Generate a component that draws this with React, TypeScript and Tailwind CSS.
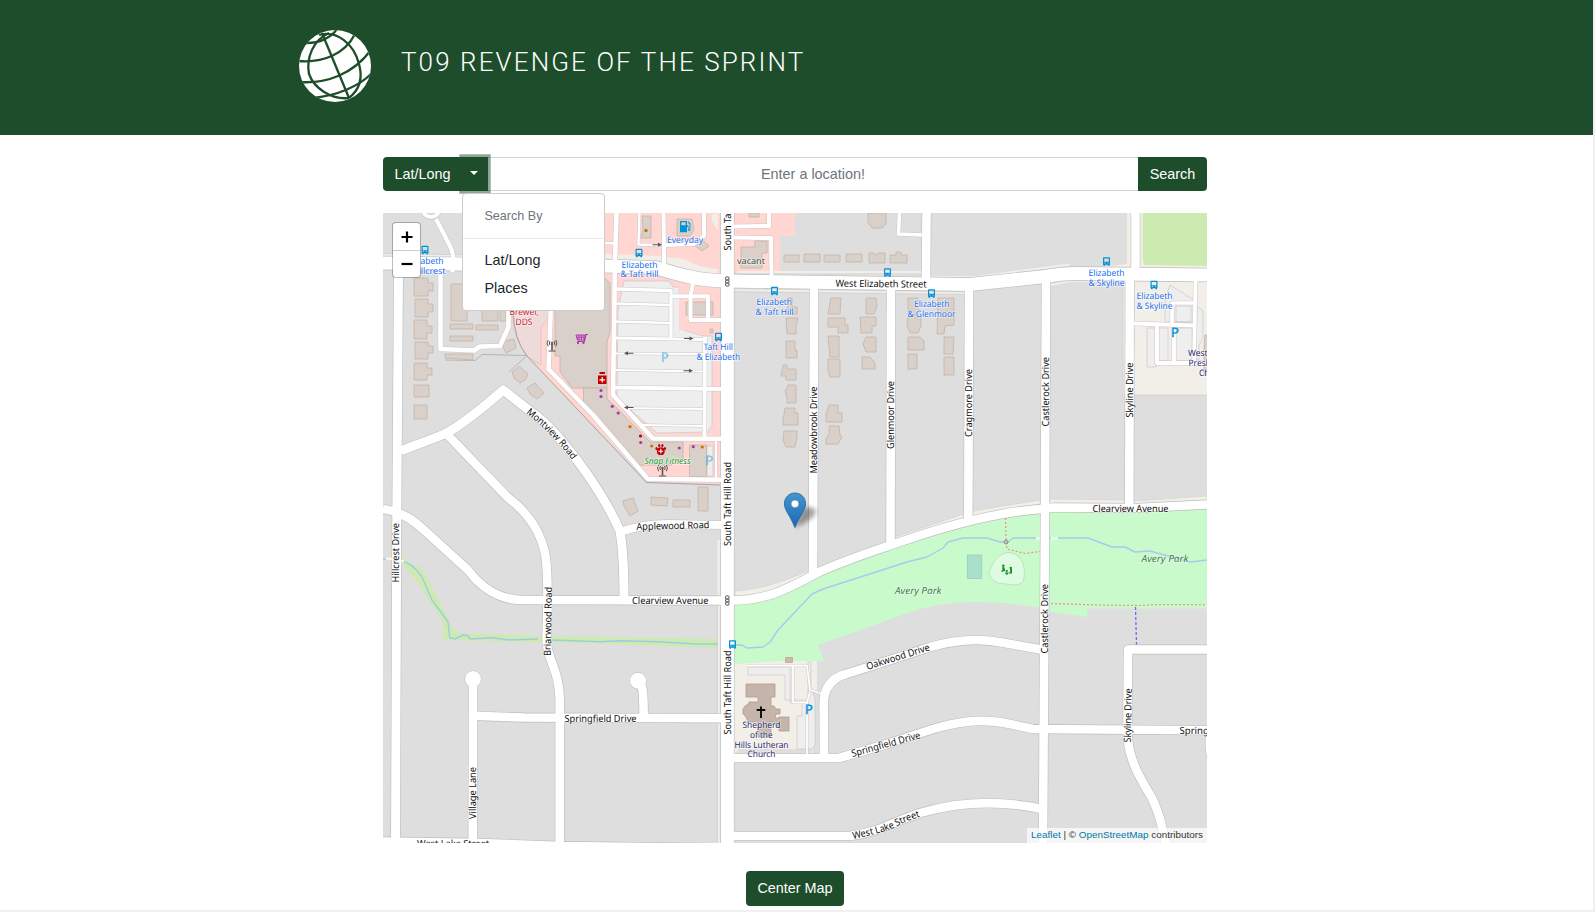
import React from "react";

const ROAD = "#ffffff";
const CASING = "#bdbdbd";

type Road = { d: string; w: number };

const streets: Road[] = [
  { d: "M398.5 270L396.7 530L395.5 843", w: 9 },
  { d: "M401 451C416 444 432 440 446.7 432.7C464 424 486 405 503.3 390L530 411C550 425 563 442 577 460C592 480 608 504 620 531C624 555 624 580 624 598", w: 9 },
  { d: "M446.7 434L508.3 498C530 514 541 535 545 553C548 568 548 600 546.5 640C547 660 559.5 670 559.7 700L559.7 843", w: 8.6 },
  { d: "M383 509C402 512 413 520 424 530L468 570C480 586 497 600 523 600L727 600.5", w: 8.6 },
  { d: "M727 600.5C765 601 786 590 817 573C850 558 880 549 900 542C940 528 990 513 1040 509L1053 507.5L1137 508L1207 504.5", w: 8.6 },
  { d: "M620 532C637 526 652 524 668 524L722 525", w: 8 },
  { d: "M814 287L813 573", w: 8.6 },
  { d: "M891 287L890.5 545", w: 8.6 },
  { d: "M969 287L968.3 520", w: 8.6 },
  { d: "M1046 276L1045 509L1043 843", w: 8.6 },
  { d: "M1135.5 213L1135.5 275", w: 8.6 },
  { d: "M1129.7 275L1129.3 508", w: 8.6 },
  { d: "M926.5 213L926 284", w: 8.6 },
  { d: "M473 679L472.8 843", w: 8.6 },
  { d: "M473 715.8L523 717.5L727 718.3", w: 8.6 },
  { d: "M639 681C643 686 643.5 692 643.7 718", w: 8.6 },
  { d: "M383 841.5L480 843L560 846L720 848", w: 8.6 },
  { d: "M824 758L823.7 706C823 688 832 678 846 674L887 661L930 647C965 637 990 640 1003 642.7L1044 650", w: 8.6 },
  { d: "M727 758L839 758L887 744L933 729C970 718 990 720 1010 724L1033 729L1207 730.3", w: 8.6 },
  { d: "M727 836L850 836C880 832 890 823 920 813C960 801 1000 800 1042 809", w: 8.6 },
  { d: "M1207 649.5L1128 649.5L1127.5 730C1127 755 1138 775 1149 793C1160 811 1163 832 1166 845", w: 8.6 },
  { d: "M1210 736Q1208 752 1214 766", w: 8 },
  { d: "M383 263L604 266L655 267.5C680 275 700 281 727 281L970 284.5L1045 276.5Q1062 273.5 1075 273.5L1207 275", w: 13.2 },
  { d: "M727.4 213V843", w: 13 },
];

const lanes: Road[] = [
  { d: "M616.5 213L615 262L613 395L653 438.5L722 438.7", w: 4.6 },
  { d: "M551.5 290L548.5 369L593 415L648 479L722 479.7", w: 4.6 },
  { d: "M604 243L616 243.5", w: 2.6 },
  { d: "M639.5 213L638.5 244.5L660 245", w: 2.4 },
  { d: "M663.5 213L664 245L694 244L704 236V213", w: 4 },
  { d: "M664 243L664 266", w: 4.4 },
  { d: "M734 226.5L769 226V213", w: 4 },
  { d: "M734 237.5L771 238L771.5 276", w: 4 },
  { d: "M899.5 213L898.5 234L922 235", w: 3.6 },
  { d: "M615 289L671 290.5L671 338", w: 3.4 },
  { d: "M615 303.5L671 305", w: 2.4 },
  { d: "M615 321.5L671 323", w: 2.4 },
  { d: "M615 338L705 339.5", w: 3.2 },
  { d: "M615 353.5L705 354", w: 2.2 },
  { d: "M615 370L705 371.5", w: 2.2 },
  { d: "M615 387.5L722 389", w: 3.8 },
  { d: "M624 408L704 409", w: 2.2 },
  { d: "M642 425L704 426", w: 2.2 },
  { d: "M705 337L704.5 438", w: 3.8 },
  { d: "M693.5 281L690.5 296V320H722", w: 4 },
  { d: "M671 296.3H708V320", w: 4 },
  { d: "M716 440V479", w: 2.2 },
  { d: "M452.5 272V264Q455 255 449 244L436 219", w: 4.2 },
  { d: "M440.5 270V349L474 350.5L480 346.5L500 346L508.5 327V300", w: 4.6 },
  { d: "M1195.5 280L1194 365", w: 3.8 },
  { d: "M1134 323.5L1194 325.5", w: 4 },
  { d: "M1172 325V303H1194", w: 3.6 },
  { d: "M1157 325V363H1205", w: 4 },
  { d: "M1174 326V363", w: 3.8 },
  { d: "M747 665.5H807L810 690L823 694", w: 1.8 },
  { d: "M793 665V702.5H807L810 692", w: 1.8 },
  { d: "M807 702V757", w: 1.8 },
];

const houses: string[] = [
  "414,278 428,278 428,283 433,283 433,291 428,291 428,296 414,296",
  "415,299 428,299 428,304 433,304 433,312 428,312 428,317 415,317",
  "414,320 427,320 427,326 432,326 432,333 427,333 427,339 414,339",
  "415,342 428,342 428,346 433,346 433,353 428,353 428,359 415,359",
  "414,363 427,363 427,368 432,368 432,375 427,375 427,380 414,380",
  "414,385 429,385 429,397 414,397",
  "414,405 427,405 427,419 414,419",
  "451,284 467,284 467,321 451,321",
  "482,290 498,290 498,321 482,321",
  "500,300 506,300 506,321 500,321",
  "450,324 473,324 473,329 450,329",
  "476,325 498,325 498,330 476,330",
  "450,336 473,336 473,341 450,341",
  "445,354 473,354 473,360 445,358",
  "504,341 514,339 516,348 506,353 503,347",
  "512,372 519,366 528,374 526,379 520,383 514,378",
  "527,388 535,383 544,393 537,399 530,394",
  "623,501 633,498 638,511 630,516 624,506",
  "651,497 668,498 667,506 651,505",
  "673,500 690,500 690,507 673,507",
  "698,487 708,487 708,511 698,511",
  "642,216 651,216 651,238 641,238 643,230",
  "677,219 692,219 694,230 690,236 677,236",
  "700,238 709,246 702,251 694,245",
  "741,247 755,247 755,241 767,241 767,253 762,253 762,268 741,268",
  "749,213 759,213 759,217 749,217",
  "784,255 799,255 799,262 784,262",
  "804,254 820,254 820,262 804,262",
  "824,255 840,255 840,262 824,262",
  "846,254 862,254 862,262 846,262",
  "869,253 874,253 876,255 879,253 885,253 885,263 869,263",
  "890,255 896,255 896,252 901,252 901,255 907,255 907,263 890,263",
  "868,213 886,213 886,224 882,228 872,228 868,222",
  "787,298 792,298 792,307 797,307 797,314 788,314",
  "786,318 798,318 796,326 796,334 787,334",
  "786,341 795,341 795,350 797,350 797,358 786,358",
  "783,365 787,365 787,369 796,369 796,380 786,380 786,376 781,376",
  "788,385 796,385 796,403 787,403 787,398 785,391",
  "785,408 795,408 795,413 798,413 798,425 783,425 783,420",
  "784,431 797,431 797,437 795,447 786,447 783,440",
  "831,298 841,298 840,314 828,314",
  "828,318 845,318 845,325 848,325 848,333 838,333 838,327 828,327",
  "828,336 839,336 839,357 830,357",
  "828,359 840,359 840,377 830,377 828,370",
  "866,298 876,298 877,306 874,314 866,314",
  "860,317 876,317 876,326 872,326 872,333 861,333",
  "866,337 876,337 876,352 866,352 863,344",
  "862,357 870,357 875,363 875,369 862,369",
  "908,298 918,298 918,315 908,315",
  "908,317 921,317 921,326 918,333 910,333 907,325",
  "908,337 920,337 924,341 924,350 908,350",
  "908,354 917,354 917,369 908,369",
  "938,298 954,298 954,325 945,326 944,334 937,334",
  "944,337 954,337 953,354 944,354",
  "944,357 954,357 954,375 944,375",
  "829,405 838,405 838,413 842,413 842,422 826,422 826,414",
  "829,426 839,426 840,435 842,437 838,444 826,444 826,438 829,435",
];

const busStops: [number, number][] = [
  [425, 250], [639, 253], [774.5, 291], [718.5, 337], [887.5, 272.5],
  [931.5, 293.5], [1106.5, 261.5], [1154, 285], [732.5, 644.5],
];

function Label({
  x, y, w, rot = 0, size = 9.8, color = "#111", italic = false, children,
}: {
  x: number; y: number; w: number; rot?: number; size?: number; color?: string; italic?: boolean; children: string;
}) {
  return (
    <text
      x={0}
      y={0}
      transform={`translate(${x} ${y}) rotate(${rot})`}
      textLength={w}
      lengthAdjust="spacingAndGlyphs"
      fontSize={size}
      fill={color}
      fontStyle={italic ? "italic" : "normal"}
      stroke="#ffffff"
      strokeOpacity={0.6}
      strokeWidth={1.6}
      strokeLinejoin="round"
      paintOrder="stroke"
    >
      {children}
    </text>
  );
}

function Bus({ x, y }: { x: number; y: number }) {
  return (
    <g transform={`translate(${x} ${y})`}>
      <path fillRule="evenodd" fill="#0092da" d="M-3-4.2H3L3.5-3.5V3.2H3V4.2H1.4V3.2H-1.4V4.2H-3V3.2H-3.5V-3.5ZM-2.3-2.9V.2H2.3V-2.9ZM-2.2 1.2V2.1H-1V1.2ZM1 1.2V2.1H2.2V1.2Z" />
    </g>
  );
}

function Arrow({ x, y, left = false }: { x: number; y: number; left?: boolean }) {
  return (
    <g transform={`translate(${x} ${y}) scale(${left ? -1 : 1} 1)`} fill="#555">
      <path d="M-4.5-.5H1V-2L5 0L1 2V.5H-4.5Z" />
    </g>
  );
}

function Signal({ x, y }: { x: number; y: number }) {
  return (
    <g transform={`translate(${x} ${y})`} fill="none" stroke="#555" strokeWidth="1">
      <rect x="-1.7" y="-4.6" width="3.4" height="3.1" rx=".8" />
      <rect x="-1.7" y="-1.5" width="3.4" height="3" rx=".8" />
      <rect x="-1.7" y="1.5" width="3.4" height="3.1" rx=".8" />
    </g>
  );
}

function Antenna({ x, y }: { x: number; y: number }) {
  return (
    <g transform={`translate(${x} ${y})`} fill="none" stroke="#555" strokeWidth="1">
      <path d="M0-2V5" strokeWidth="1.6" />
      <path d="M-3.5 5.5H3.5M-2-4.5Q-3.4-2.5-2-.5M2-4.5Q3.4-2.5 2-.5M-3.8-5.5Q-6-2.5-3.8.8M3.8-5.5Q6-2.5 3.8.8" />
      <circle r=".8" cy="-2.5" fill="#555" />
    </g>
  );
}

function CityMap() {
  return (
    <svg
      className="block h-[630px] w-[824px]"
      viewBox="383 213 824 630"
      fontFamily="'Noto Sans', sans-serif"
      textRendering="geometricPrecision"
    >
      <rect x="383" y="213" width="824" height="630" fill="#dedede" />

      {/* land use */}
      <path fill="#ffd6d1" d="M590 213H720.5V484L648 481L538 368L541 325L546 318V270H590Z" />
      <path fill="#ffd6d1" d="M734 213H795V236H780V272H734Z" />
      <path fill="#efdada" stroke="#d3b8b8" strokeWidth=".6" d="M500 290H549V318L541 327V365L527 356Q514 340 513 318Z" />
      <path fill="none" stroke="#a98f8f" strokeWidth=".8" d="M513 310Q514 340 527 356L646.5 482.5L720 485" />
      <path fill="none" stroke="#aaa" strokeWidth=".8" d="M445 360L475 360.5L482 354.5L527 355.5L509 372" />
      <path fill="#f2efe9" d="M604 254L660 256L684 259Q700 268 718 269V276L690 277L660 266L604 264ZM712 215L718 213V231L712 221Z" />
      <path fill="#f2efe9" d="M1134 281H1207V395H1126V281Z" />
      <path fill="#f2efe9" d="M1127 213H1207V270H1070L1127 264Z" />
      <path fill="#dedede" d="M1072 213H1127V258Q1127 263 1122 263.5L1072 266Z" />
      <path fill="#cdebb0" d="M1142.7 213H1207V266L1145 265Q1142.7 263 1142.7 259Z" />
      <path fill="#c8facc" d="M734 600C765 601 786 592 817 575C880 548 960 518 1044 511V608L1003 603Q960 600 933 606Q910 611 897 617L818 645L824 661L780 661L734 664Z" />
      <path fill="#c8facc" d="M1044 510H1207V608.5H1087L1088 617L1044 611Z" />
      <path fill="#cdebb0" d="M401 555L412 565L421.7 567L453 628L457 633.5L538 636L717 639V648L640 645L538 642L444 640L441.7 620L418 583L401 562Z" />
      <path fill="#f2efe9" d="M734 664L780 661H817V753H734Z" />
      <path fill="#dedede" d="M817 661H824V753H813V690H817ZM739 749H812V755H734Z" />
      <path fill="#f2efe9" stroke="#d0ccc6" strokeWidth=".5" d="M735 591C765 589 786 580 808 571V575C780 592 760 594 735 596ZM818 567L886 541V546L818 573ZM895 537L964 514V520L895 543ZM973 511L1040 500V506L973 516ZM1050 499L1125 500V505H1050ZM1134 501L1207 496V501L1134 505Z" />
      <path fill="none" stroke="#f2efe9" strokeWidth="2.2" d="M383 255L604 258M718.7 540V843M1124 282V395M734 274L925 276M930 277L975 277L1070 264.5M734 290.5L970 293.5M1050 285L1070 281L1126 281M737 272H922" />
      <path fill="none" stroke="#c8c8c8" strokeWidth=".6" d="M383 253.5L604 257M717.3 606V843M1123 282V395M1134 395H1207M734 273.5L925 275.5M734 291.7L970 294.5M1137.5 213V268" />

      {/* car parks */}
      <g fill="#eeeeee" stroke="#c9c0c0" strokeWidth=".6">
        <path d="M618 310L624 281H669L673 287H679V296L683 330L703 336H712V426L708 432L657 433L617 398Z" />
        <path d="M1170 285L1194 300V322H1165V300ZM1147 328H1156V367H1147ZM1158 328H1168V361H1158ZM1175 328H1192V361H1175ZM1176 306H1191V322H1176ZM1197 306L1203 311V338L1199 345V360H1196Z" />
        <path d="M748 667H790V703H802V716H797V749H812L815 745V698L811 690V662H808V700H785V675H748Z" />
        <path d="M707 446H713V476H707Z" />
      </g>
      <path fill="#ffd6d1" d="M679 286L690 284H716V330H679Z" />

      {/* buildings */}
      <g fill="#d9d0c9" stroke="#c5b3a6" strokeWidth=".8">
        <path d="M555 290L560 278H605L610 283V332L607 342V388H572L560 372V356H555Z" />
        <path d="M583.5 388H607V399L613 404L650 442H683V460H672V465H638L626 450L583.5 407Z" />
        <path d="M689.5 445H706.5V476.5H689.5Z" />
        <path d="M686 302H713V315H686ZM710 329H713V333H710Z" />
        <path d="M1205 335H1208V375H1204V345Z" />
        {houses.map((p) => (
          <polygon key={p} points={p} />
        ))}
      </g>
      <path fill="#c5b5aa" stroke="#b09c8e" strokeWidth=".8" d="M746 684H775V697H771V706H774L776 709H780V714H776L775 718H779V717H789V731H779V728L771 721V737H758V722H748L746 717L743 714V709L746 705H748L749 702H758V697H746Z" />
      <path fill="#cbb9ae" stroke="#b09c8e" strokeWidth=".6" d="M785.5 657.5H792.5V662.5H785.5Z" />

      {/* water, pitch, playground */}
      <g fill="none" stroke="#a0cbe3" strokeWidth="1.4" strokeLinejoin="round">
        <path d="M383 559L400 561Q412 562 422 577L432 600L448 622L449.7 637.5L455 639L463 635L467.7 635.5L470 639L493 637.7L508 640L538 639M552 640L600 641.7L620 640.7L657 641.7L697 644L718 644" />
        <path stroke="#abc9ea" d="M735 645H742L747 648L763 647L770 642L778 630L812 594L823 589L907 562L927 557L943 548L948 542L963 538H987L1000 542H1008L1013 538H1088L1112 547H1125L1135 552L1150 551L1190 562L1207 560" />
      </g>
      <rect x="967.3" y="555" width="14.5" height="23.5" fill="#aae0cb" stroke="#92cdb6" strokeWidth=".7" />
      <path d="M1003 554Q1010 550 1018 556Q1026 563 1024 578Q1023 585 1014 585L998 583Q987 578 990 570Q995 557 1003 554Z" fill="#dffce2" stroke="#aadcb0" strokeWidth=".7" />
      <g fill="#0a8f1a">
        <circle cx="1003.3" cy="565.6" r="1.2" />
        <circle cx="1010.8" cy="568" r="1.2" />
        <circle cx="1006.8" cy="571" r="1.1" />
        <path d="M1002.4 566.6H1004L1005.3 570.8L1004 571.4L1003.2 570.4V571.8H1001.4V570.6H1002.4ZM1010.2 569H1012V573.6H1008.8V572.4H1010.2ZM1004.8 572.2L1006.8 572.8L1008.6 572L1007.8 574.6H1006Z" />
      </g>
      <g fill="none" strokeDasharray="2 2">
        <path stroke="#f58f83" strokeWidth="1.2" d="M1005.5 518L1006 538L1007 549L1025 553.5L1040 551.5M1051 603.5L1100 605L1140 605.5L1160 604.5L1207 604.8" />
        <path stroke="#6a6af5" strokeWidth="1.3" strokeDasharray="3 2" d="M1135.5 607L1136.5 645" />
      </g>
      <circle cx="1006" cy="542" r="2" fill="none" stroke="#777" strokeWidth=".8" />

      {/* roads */}
      <g fill="none" strokeLinejoin="round">
        {lanes.map((r) => (
          <path key={r.d} d={r.d} stroke="#cfc6c6" strokeWidth={r.w + 1} />
        ))}
        {streets.map((r) => (
          <path key={r.d} d={r.d} stroke={CASING} strokeWidth={r.w + 1.2} />
        ))}
        <circle cx="473" cy="679" r="8.5" fill={CASING} />
        <circle cx="638" cy="680.7" r="8.5" fill={CASING} />
        <circle cx="431" cy="208.5" r="8.5" stroke={CASING} strokeWidth="5" />
        {lanes.map((r) => (
          <path key={r.d} d={r.d} stroke={ROAD} strokeWidth={r.w} />
        ))}
        <circle cx="431" cy="208.5" r="8.5" stroke={ROAD} strokeWidth="4" />
        <circle cx="473" cy="679" r="8" fill={ROAD} />
        <circle cx="638" cy="680.7" r="8" fill={ROAD} />
        {streets.map((r) => (
          <path key={r.d} d={r.d} stroke={ROAD} strokeWidth={r.w} />
        ))}
      </g>
      <path d="M1036 538.3H1040M1051 538.3H1058M386 559H392M398 561H404" stroke="#fff" strokeWidth="2.5" opacity=".8" />

      {/* points of interest */}
      {busStops.map(([x, y]) => (
        <Bus key={`${x}-${y}`} x={x} y={y} />
      ))}
      <Signal x={727.3} y={281.5} />
      <Signal x={727.3} y={600.5} />
      <Antenna x={552} y={345.5} />
      <Antenna x={662.5} y={470.5} />
      <Arrow x={657} y={244.7} />
      <Arrow x={688.5} y={338.5} />
      <Arrow x={629} y={353.3} left />
      <Arrow x={688} y={370.8} />
      <Arrow x={629} y={407.5} left />
      <g fill="none" stroke="#ac39ac" strokeWidth="1.1">
        <path d="M588 334.5H586L584.5 341.5H577.5M576 335H586M576 335L577.5 340H585M576.5 337.3H585.5M579 335V340M581.5 335V340M584 335V340" />
        <circle cx="578" cy="343" r=".6" /><circle cx="583.5" cy="343" r=".6" />
      </g>
      <path fill="#bf0000" d="M599.5 372H605V374H599.5ZM598 375.5H606.5V384H598Z" />
      <path stroke="#fff" strokeWidth="1.2" d="M602.2 377V382.6M599.4 379.8H605" />
      <g fill="#bf0000">
        <ellipse cx="656.5" cy="448.5" rx="1.1" ry="1.6" /><ellipse cx="659.2" cy="445.5" rx="1.1" ry="1.6" />
        <ellipse cx="662.4" cy="445.5" rx="1.1" ry="1.6" /><ellipse cx="665" cy="448.5" rx="1.1" ry="1.6" />
        <circle cx="660.8" cy="451.2" r="3.9" />
      </g>
      <path stroke="#fff" strokeWidth="1.1" d="M660.8 448.8V453.6M658.4 451.2H663.2" />
      <path fill="#0092da" fillRule="evenodd" d="M680 221H687V225.5H687.8Q688.6 225.6 688.6 226.5V229.5Q689.2 230.2 689.5 229.4V224.2L687.6 222.2L688.4 221.4L690.4 223.6V230Q689.6 231.6 688 230.6V227H687V232.2H680ZM681.3 222.3V225.3H685.7V222.3Z" />
      <g fill="#ac39ac">
        <circle cx="601" cy="390.5" r="1.6" /><circle cx="601" cy="396.5" r="1.6" /><circle cx="612.3" cy="406.3" r="1.6" />
        <circle cx="618.2" cy="413" r="1.6" /><circle cx="640.7" cy="442.5" r="1.6" /><circle cx="679.3" cy="448" r="1.6" /><circle cx="693.3" cy="446.7" r="1.6" />
      </g>
      <g fill="#c77400">
        <circle cx="646" cy="230.5" r="1.7" /><circle cx="630" cy="426.7" r="1.6" /><circle cx="651.7" cy="446" r="1.6" /><circle cx="702.3" cy="447" r="1.6" />
      </g>
      <circle cx="640.5" cy="436" r="1.6" fill="#bf0000" />
      <g fontSize="13" fill="#0092da" stroke="#0092da" strokeWidth=".4">
        <text x="661" y="361.5" opacity=".45">P</text>
        <text x="705.5" y="465" opacity=".45">P</text>
        <text x="1171" y="337.3">P</text>
        <text x="805" y="714.3">P</text>
      </g>
      <path d="M761 706.5V718M756.7 710H765.3" stroke="#000" strokeWidth="1.8" />

      {/* labels */}
      <Label x={835.5} y={286.7} w={91} rot={0.6}>West Elizabeth Street</Label>
      <Label x={632} y={604.2} w={76.5}>Clearview Avenue</Label>
      <Label x={1092.5} y={511.5} w={76}>Clearview Avenue</Label>
      <Label x={636.5} y={530} w={73} rot={-1.5}>Applewood Road</Label>
      <Label x={564.5} y={722} w={72}>Springfield Drive</Label>
      <Label x={417} y={846.8} w={72}>West Lake Street</Label>
      <Label x={1179.5} y={733.7} w={75}>Springfield Drive</Label>
      <Label x={399.4} y={582.5} w={59.5} rot={-90}>Hillcrest Drive</Label>
      <Label x={550.7} y={656} w={69} rot={-89}>Briarwood Road</Label>
      <Label x={476.4} y={819} w={52} rot={-90}>Village Lane</Label>
      <Label x={730.8} y={546} w={84} rot={-90}>South Taft Hill Road</Label>
      <Label x={730.8} y={734.5} w={84} rot={-90}>South Taft Hill Road</Label>
      <Label x={731.3} y={250.5} w={84} rot={-90}>South Taft Hill Road</Label>
      <Label x={816.9} y={473.5} w={87} rot={-90}>Meadowbrook Drive</Label>
      <Label x={894.3} y={449} w={68} rot={-90}>Glenmoor Drive</Label>
      <Label x={972.2} y={437} w={68} rot={-90}>Cragmore Drive</Label>
      <Label x={1049.4} y={426.5} w={69.5} rot={-90}>Castlerock Drive</Label>
      <Label x={1047.6} y={653.5} w={69.5} rot={-90}>Castlerock Drive</Label>
      <Label x={1133} y={417.5} w={55} rot={-90}>Skyline Drive</Label>
      <Label x={1130.8} y={742.5} w={54} rot={-89}>Skyline Drive</Label>
      <Label x={867.5} y={670} w={66} rot={-17.5}>Oakwood Drive</Label>
      <Label x={852.5} y={757} w={71} rot={-15.5}>Springfield Drive</Label>
      <path id="lake" fill="none" d="M853 839Q885 832.5 894 827.5Q905 821.5 925 815" />
      <path id="montview" fill="none" d="M526 413Q551.5 433 571 458.5" />
      <g fontSize="9.8" fill="#111" stroke="#fff" strokeOpacity=".6" strokeWidth="1.6" paintOrder="stroke">
        <text textLength="71" lengthAdjust="spacingAndGlyphs"><textPath href="#lake">West Lake Street</textPath></text>
        <text textLength="66" lengthAdjust="spacingAndGlyphs"><textPath href="#montview">Montview Road</textPath></text>
      </g>

      <Label x={407.5} y={264.2} w={36} size={8.9} color="#1c6ff0">Elizabeth</Label>
      <Label x={403} y={274.2} w={42.5} size={8.9} color="#1c6ff0">&amp; Hillcrest</Label>
      <Label x={621.5} y={267.5} w={36} size={8.9} color="#1c6ff0">Elizabeth</Label>
      <Label x={620.5} y={277.3} w={38} size={8.9} color="#1c6ff0">&amp; Taft Hill</Label>
      <Label x={667} y={242.6} w={36} size={8.9} color="#1c6ff0">Everyday</Label>
      <Label x={756.5} y={305.3} w={35.5} size={8.9} color="#1c6ff0">Elizabeth</Label>
      <Label x={755.5} y={315.3} w={38} size={8.9} color="#1c6ff0">&amp; Taft Hill</Label>
      <Label x={703.5} y={350.2} w={29.5} size={8.9} color="#1c6ff0">Taft Hill</Label>
      <Label x={696.5} y={360} w={43.5} size={8.9} color="#1c6ff0">&amp; Elizabeth</Label>
      <Label x={914} y={307.3} w={35.5} size={8.9} color="#1c6ff0">Elizabeth</Label>
      <Label x={907.5} y={317.3} w={48} size={8.9} color="#1c6ff0">&amp; Glenmoor</Label>
      <Label x={1088.5} y={276} w={36} size={8.9} color="#1c6ff0">Elizabeth</Label>
      <Label x={1088.5} y={286} w={36} size={8.9} color="#1c6ff0">&amp; Skyline</Label>
      <Label x={1136.5} y={299} w={36} size={8.9} color="#1c6ff0">Elizabeth</Label>
      <Label x={1136.5} y={309} w={36} size={8.9} color="#1c6ff0">&amp; Skyline</Label>
      <Label x={737} y={263.7} w={28} size={8.9} color="#444">vacant</Label>
      <Label x={509.5} y={315} w={29} size={8.9} color="#c8202e">Brewer,</Label>
      <Label x={515.5} y={324.5} w={17} size={8.9} color="#c8202e">DDS</Label>
      <Label x={644.5} y={463.8} w={46} size={8.9} color="#1a9a2f" italic>Snap Fitness</Label>
      <Label x={895} y={593.7} w={46.5} color="#34803f" italic>Avery Park</Label>
      <Label x={1141.5} y={561.7} w={47} color="#34803f" italic>Avery Park</Label>
      <Label x={742.5} y={728.3} w={38} size={8.9} color="#26266a">Shepherd</Label>
      <Label x={750} y={738.3} w={22.5} size={8.9} color="#26266a">of the</Label>
      <Label x={734.5} y={747.5} w={54} size={8.9} color="#26266a">Hills Lutheran</Label>
      <Label x={747.5} y={757.3} w={28} size={8.9} color="#26266a">Church</Label>
      <Label x={1188} y={356.3} w={50} size={8.9} color="#26266a">Westminster</Label>
      <Label x={1188.5} y={366.3} w={50} size={8.9} color="#26266a">Presbyterian</Label>
      <Label x={1199} y={376.3} w={28} size={8.9} color="#26266a">Church</Label>

      {/* marker */}
      <defs>
        <linearGradient id="pin" x1="0" y1="0" x2="0" y2="1">
          <stop offset="0" stopColor="#4596cf" />
          <stop offset="1" stopColor="#1768b8" />
        </linearGradient>
        <filter id="soft" x="-50%" y="-50%" width="200%" height="200%">
          <feGaussianBlur stdDeviation="2" />
        </filter>
      </defs>
      <path d="M795 528L801 511Q809 504 815 509Q818 515 808 521Z" fill="#000" opacity=".35" filter="url(#soft)" />
      <path
        d="M795 493C788.7 493 784.4 498 784.4 503.8C784.4 510 790 515.5 795 527.5C800 515.5 805.6 510 805.6 503.8C805.6 498 801.3 493 795 493Z"
        fill="url(#pin)" stroke="#2e6c97" strokeWidth=".9"
      />
      <circle cx="795" cy="503.8" r="3.9" fill="#fff" stroke="#2e6c97" strokeWidth=".5" />
    </svg>
  );
}

function Globe() {
  return (
    <svg className="h-[72px] w-[72px]" viewBox="0 0 72 72">
      <defs>
        <clipPath id="disc"><circle cx="36" cy="36" r="36" /></clipPath>
      </defs>
      <circle cx="36" cy="36" r="36" fill="#fff" />
      <g clipPath="url(#disc)" fill="none" stroke="#1e4d2b" strokeWidth="2.3">
        <path d="M23 3L50 68" />
        <path d="M30 3C14 10 7 28 10 44C15 58 32 70 50 68" />
        <path d="M20 5C38 0 55 14 60 34C64 48 60 60 50 68" />
        <path d="M8 13C20 13 32 8 38 -1" />
        <path d="M0 31C24 33 46 24 56 4" />
        <path d="M0 52C28 54 54 44 72 20" />
        <path d="M13 68C38 66 60 56 72 44" />
      </g>
    </svg>
  );
}

export default function App() {
  return (
    <div className="h-[912px] w-[1595px] overflow-hidden border-b-2 border-r-2 border-[#f0f0f0] bg-white font-['Liberation_Sans',Arial,sans-serif] text-[14.4px] text-[#212529]">
      <header className="flex h-[135px] items-start bg-[#1e4d2b] pl-[299.4px] pt-[29.5px]">
        <Globe />
        <h1 className="ml-[29.6px] mt-[14.5px] whitespace-nowrap font-['Roboto',sans-serif] text-[26px] font-light leading-[36px] tracking-[2.1px] text-white">
          T09 REVENGE OF THE SPRINT
        </h1>
      </header>

      <main className="ml-[383px] flex w-[824px] flex-col pt-[22px]">
        <div className="relative flex h-[34px]">
          <button className="w-[79px] rounded-l-[4px] bg-[#1e4d2b] pt-px text-white">Lat/Long</button>
          <button className="z-10 flex w-[26px] items-center justify-center bg-[#1e4d2b] pr-[2px] shadow-[0_0_0_2.7px_rgba(30,77,43,0.5)]">
            <span className="-mt-0.5 border-x-[4px] border-t-[4px] border-x-transparent border-t-white" />
          </button>
          <input
            className="min-w-0 flex-1 border-y border-[#ced4da] pt-[2px] text-center outline-none placeholder:text-[#6c757d]"
            placeholder="Enter a location!"
          />
          <button className="w-[69px] rounded-r-[4px] bg-[#1e4d2b] pt-px text-white">Search</button>

          <div className="absolute left-[79px] top-[36px] z-20 h-[118px] w-[143px] rounded-[4px] border border-[#cccccc] bg-white pt-[7px]">
            <div className="flex h-[30px] items-center pl-[21.4px] text-[12.6px] text-[#6c757d]">Search By</div>
            <div className="mt-[7px] h-px bg-[#e9ecef]" />
            <div className="mt-[8px] flex h-[28px] items-center pl-[21.4px]">Lat/Long</div>
            <div className="flex h-[28px] items-center pl-[21.4px]">Places</div>
          </div>
        </div>

        <section className="relative mt-[22px] h-[630px]">
          <CityMap />
          <div className="absolute left-[9px] top-[9px] flex w-[29px] flex-col rounded-[4px] border border-black/25 bg-white bg-clip-padding">
            <button className="flex h-[28px] items-center justify-center border-b border-[#cccccc]">
              <svg width="12" height="12" viewBox="0 0 12 12"><path d="M6 .5V11.5M.5 6H11.5" stroke="#000" strokeWidth="2.2" /></svg>
            </button>
            <button className="flex h-[26px] items-center justify-center">
              <svg width="12" height="12" viewBox="0 0 12 12"><path d="M.5 6H11.5" stroke="#000" strokeWidth="2.2" /></svg>
            </button>
          </div>
          <div className="absolute bottom-0 right-0 flex h-[15px] w-[180px] items-center justify-center whitespace-pre bg-white/70 text-[9.9px] text-[#333333]">
            <span className="text-[#0078a8]">Leaflet</span> | © <span className="text-[#0078a8]">OpenStreetMap</span> contributors
          </div>
        </section>

        <button className="mt-[28px] h-[35px] w-[98px] self-center rounded-[4px] bg-[#1e4d2b] text-white">
          Center Map
        </button>
      </main>
    </div>
  );
}
